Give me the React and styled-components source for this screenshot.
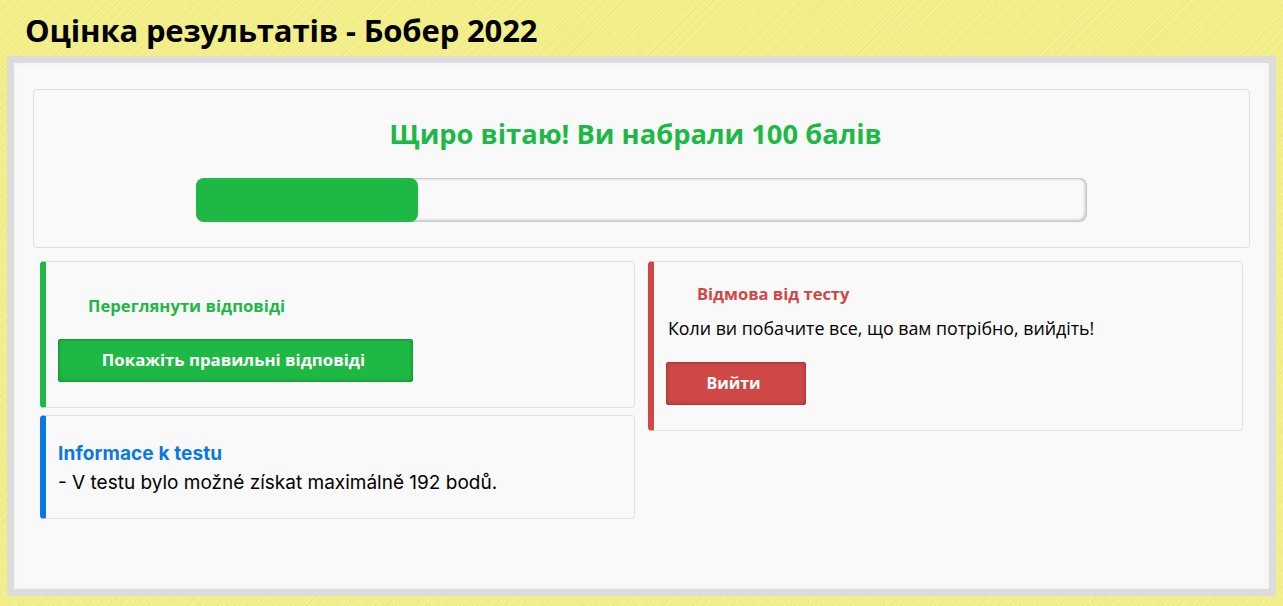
import React from "react";
import styled, { createGlobalStyle } from "styled-components";

const GlobalStyle = createGlobalStyle`
  html, body {
    margin: 0;
    padding: 0;
    height: 100%;
  }
  body {
    overflow: hidden;
    font-family: "Open Sans", "Noto Sans", sans-serif;
    background-color: #f1ed80;
    background-image:
      repeating-linear-gradient(45deg, rgba(255, 255, 255, 0.16) 0 1px, transparent 1px 3px),
      repeating-linear-gradient(-45deg, rgba(255, 255, 255, 0.14) 0 1px, transparent 1px 4px),
      repeating-linear-gradient(135deg, rgba(205, 200, 70, 0.1) 0 1px, transparent 1px 7px);
  }
`;

const Page = styled.div`
  width: 1283px;
  height: 606px;
  padding: 0 7px 10px;
  box-sizing: border-box;
  display: flex;
  flex-direction: column;
`;

const Title = styled.h1`
  margin: 0;
  height: 56px;
  padding-left: 18px;
  font-size: 31px;
  letter-spacing: -0.15px;
  line-height: 60px;
  font-weight: 700;
  color: #000;
`;

const Panel = styled.main`
  flex: 1;
  box-sizing: border-box;
  border: 7px solid #dcdcdc;
  background: #f9f9f9;
  box-shadow: inset 0 0 8px rgba(0, 0, 0, 0.03);
  padding: 26px 19px 0;
`;

const ResultCard = styled.section`
  box-sizing: border-box;
  height: 159px;
  border: 1px solid #dfdfdf;
  border-radius: 4px;
  padding: 24px 0 0;
  display: flex;
  flex-direction: column;
  align-items: center;
`;

const Score = styled.h2`
  margin: 0;
  font-size: 27.3px;
  line-height: 40px;
  font-weight: 700;
  color: #1eb846;
  transform: translateX(-6px);
`;

const ProgressTrack = styled.div`
  box-sizing: border-box;
  width: 891px;
  height: 44px;
  margin-top: 24px;
  margin-right: 1px;
  border-radius: 8px;
  background: #f9f9f9;
  box-shadow: inset -1px -1px 3px 1px rgba(0, 0, 0, 0.22), inset 1px 1px 2px rgba(0, 0, 0, 0.16);
`;

const ProgressFill = styled.div`
  height: 100%;
  border-radius: 8px;
  background: #1eb944;
`;

const Columns = styled.div`
  display: grid;
  grid-template-columns: 595px 595px;
  column-gap: 13px;
  align-items: start;
  margin: 13px 0 0 7px;
`;

const Column = styled.div`
  display: flex;
  flex-direction: column;
  gap: 7px;
`;

const Card = styled.section`
  box-sizing: border-box;
  height: ${(p) => p.$height}px;
  border: 1px solid #e0e0e0;
  border-left: 6px solid ${(p) => p.$accent};
  border-radius: 4px;
  padding: ${(p) => p.$padding};
`;

const CardHeading = styled.h3`
  margin: 0;
  padding-left: ${(p) => p.$indent}px;
  font-size: ${(p) => p.$size}px;
  line-height: 24px;
  font-weight: 700;
  color: ${(p) => p.$color};
`;

const CardText = styled.p`
  margin: 10px 0 0 2px;
  font-size: 17.8px;
  line-height: 24px;
  color: #000;
`;

const ActionButton = styled.button`
  display: block;
  box-sizing: border-box;
  width: ${(p) => p.$width}px;
  height: 43px;
  margin-top: ${(p) => p.$top}px;
  padding: 0 ${(p) => p.$shift}px 2px 0;
  border: 1px solid ${(p) => p.$edge};
  border-radius: 2px;
  background: ${(p) => p.$fill};
  box-shadow: inset 0 0 4px rgba(0, 0, 0, 0.18);
  color: #fff;
  font-family: inherit;
  font-size: ${(p) => p.$size}px;
  font-weight: 700;
`;

const InfoHeading = styled.h3`
  margin: 0;
  font-family: "Inter", "Noto Sans", sans-serif;
  font-size: 19px;
  letter-spacing: 0.12px;
  line-height: 28px;
  font-weight: 700;
  color: #0b76e6;
`;

const InfoText = styled.p`
  margin: 1px 0 0;
  font-family: "Inter", "Noto Sans", sans-serif;
  font-size: 19px;
  line-height: 28px;
  color: #000;
`;

const App = () => {
  return (
    <Page>
      <GlobalStyle />
      <Title>Оцінка результатів - Бобер 2022</Title>
      <Panel>
        <ResultCard>
          <Score>Щиро вітаю! Ви набрали 100 балів</Score>
          <ProgressTrack>
            <ProgressFill style={{ width: `${(222 / 891) * 100}%` }} />
          </ProgressTrack>
        </ResultCard>
        <Columns>
          <Column>
            <Card $accent="#1eb944" $height={147} $padding="32px 0 0 12px">
              <CardHeading $indent={30} $size={16.7} $color="#1eb846">
                Переглянути відповіді
              </CardHeading>
              <ActionButton $width={355} $top={21} $shift={4} $size={16.8} $fill="#1eb944" $edge="#179a3a">
                Покажіть правильні відповіді
              </ActionButton>
            </Card>
            <Card $accent="#0b76e6" $height={104} $padding="24px 0 0 12px">
              <InfoHeading>Informace k testu</InfoHeading>
              <InfoText>- V testu bylo možné získat maximálně 192 bodů.</InfoText>
            </Card>
          </Column>
          <Column>
            <Card $accent="#cf4846" $height={170} $padding="20px 0 0 12px">
              <CardHeading $indent={31} $size={16.5} $color="#cf4846">
                Відмова від тесту
              </CardHeading>
              <CardText>Коли ви побачите все, що вам потрібно, вийдіть!</CardText>
              <ActionButton $width={140} $top={22} $shift={5} $size={16} $fill="#cf4846" $edge="#a83a38">
                Вийти
              </ActionButton>
            </Card>
          </Column>
        </Columns>
      </Panel>
    </Page>
  );
};

export default App;
